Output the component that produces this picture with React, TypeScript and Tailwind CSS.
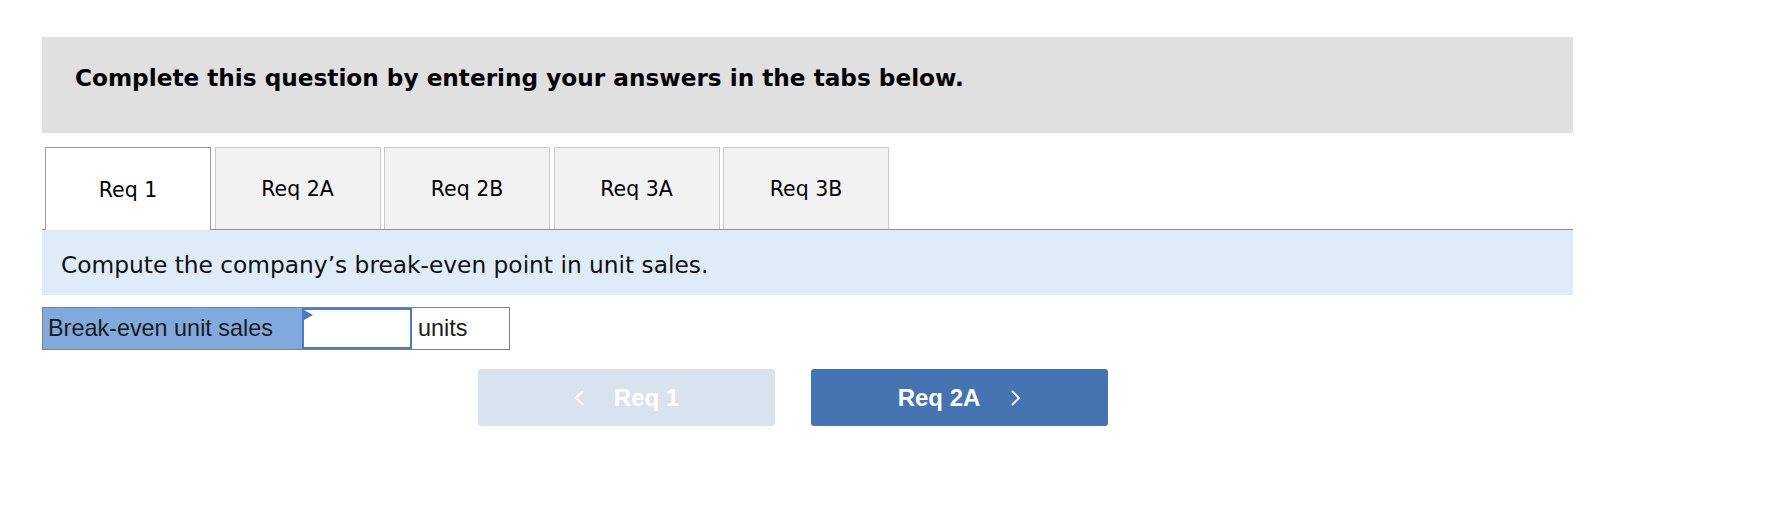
import React from 'react';

const tabs = ['Req 1', 'Req 2A', 'Req 2B', 'Req 3A', 'Req 3B'];

function Chevron({ dir }: { dir: 'left' | 'right' }) {
    return (
        <svg width="10" height="16" viewBox="0 0 10 16" fill="none" className="shrink-0">
            <polyline
                points={dir === 'left' ? '8.5,1.5 2,8 8.5,14.5' : '1.5,1.5 8,8 1.5,14.5'}
                stroke="#ffffff"
                strokeWidth="1.8"
                strokeLinecap="round"
                strokeLinejoin="round"
            />
        </svg>
    );
}

export default function App() {
    const active = 0;

    return (
        <div className="min-h-[530px] w-full bg-white pl-[42px] pt-[37px]">
            <div className="w-[1531px]">
                {/* Instructions banner */}
                <div className="h-[96px] bg-[#e0e0e0] pl-[33px] pt-[27px]">
                    <p className="font-['DejaVu_Sans',sans-serif] text-[23.2px] font-bold leading-[27px] text-black">
                        Complete this question by entering your answers in the tabs below.
                    </p>
                </div>

                {/* Tab strip */}
                <div className="mt-[14px] flex h-[83px] items-start gap-[3.5px] border-b border-[#8f8f8f] pl-[3px]">
                    {tabs.map((tab, i) =>
                        i === active ? (
                            <div
                                key={tab}
                                className="relative z-10 flex h-[83px] w-[166px] items-center justify-center border border-b-0 border-[#9a9a9a] bg-white pt-[2px] font-['DejaVu_Sans',sans-serif] text-[20.5px] text-black"
                            >
                                {tab}
                            </div>
                        ) : (
                            <div
                                key={tab}
                                className="flex h-[82px] w-[166px] items-center justify-center border border-b-0 border-[#cacaca] bg-[#f2f2f2] pt-[2px] font-['DejaVu_Sans',sans-serif] text-[20.5px] text-black"
                            >
                                {tab}
                            </div>
                        )
                    )}
                </div>

                {/* Requirement prompt */}
                <div className="h-[65px] bg-[#deebf8] pl-[19px] pt-[21px]">
                    <p className="font-['DejaVu_Sans',sans-serif] text-[23.3px] leading-[27px] text-[#111]">
                        Compute the company’s break-even point in unit sales.
                    </p>
                </div>

                {/* Answer row */}
                <div className="mt-[12px] flex h-[43px] w-[468px] border border-[#808080] font-['Liberation_Sans',Arial,sans-serif] text-[23.4px] text-[#1a1a1a]">
                    <div className="flex w-[259px] items-center bg-[#80aade] pl-[5px]">Break-even unit sales</div>
                    <div className="relative w-[110px] border-2 border-[#4c7bbf] bg-white">
                        <svg width="9" height="11" viewBox="0 0 9 11" className="absolute left-0 top-0">
                            <polygon points="0,0 9,5 0,10" fill="#4c7bbf" />
                        </svg>
                    </div>
                    <div className="flex flex-1 items-center bg-white pl-[6px]">units</div>
                </div>

                {/* Navigation */}
                <div className="mt-[19px] flex gap-[36px] pl-[436px]">
                    <button className="flex h-[57px] w-[297px] items-center justify-center gap-[30px] rounded-[3px] bg-[#d9e3ef] font-['Liberation_Sans',Arial,sans-serif] text-[24px] font-bold text-white">
                        <Chevron dir="left" />
                        <span>Req 1</span>
                    </button>
                    <button className="flex h-[57px] w-[297px] items-center justify-center gap-[31px] rounded-[3px] bg-[#4674b3] font-['Liberation_Sans',Arial,sans-serif] text-[24px] font-bold text-white">
                        <span>Req 2A</span>
                        <Chevron dir="right" />
                    </button>
                </div>
            </div>
        </div>
    );
}
